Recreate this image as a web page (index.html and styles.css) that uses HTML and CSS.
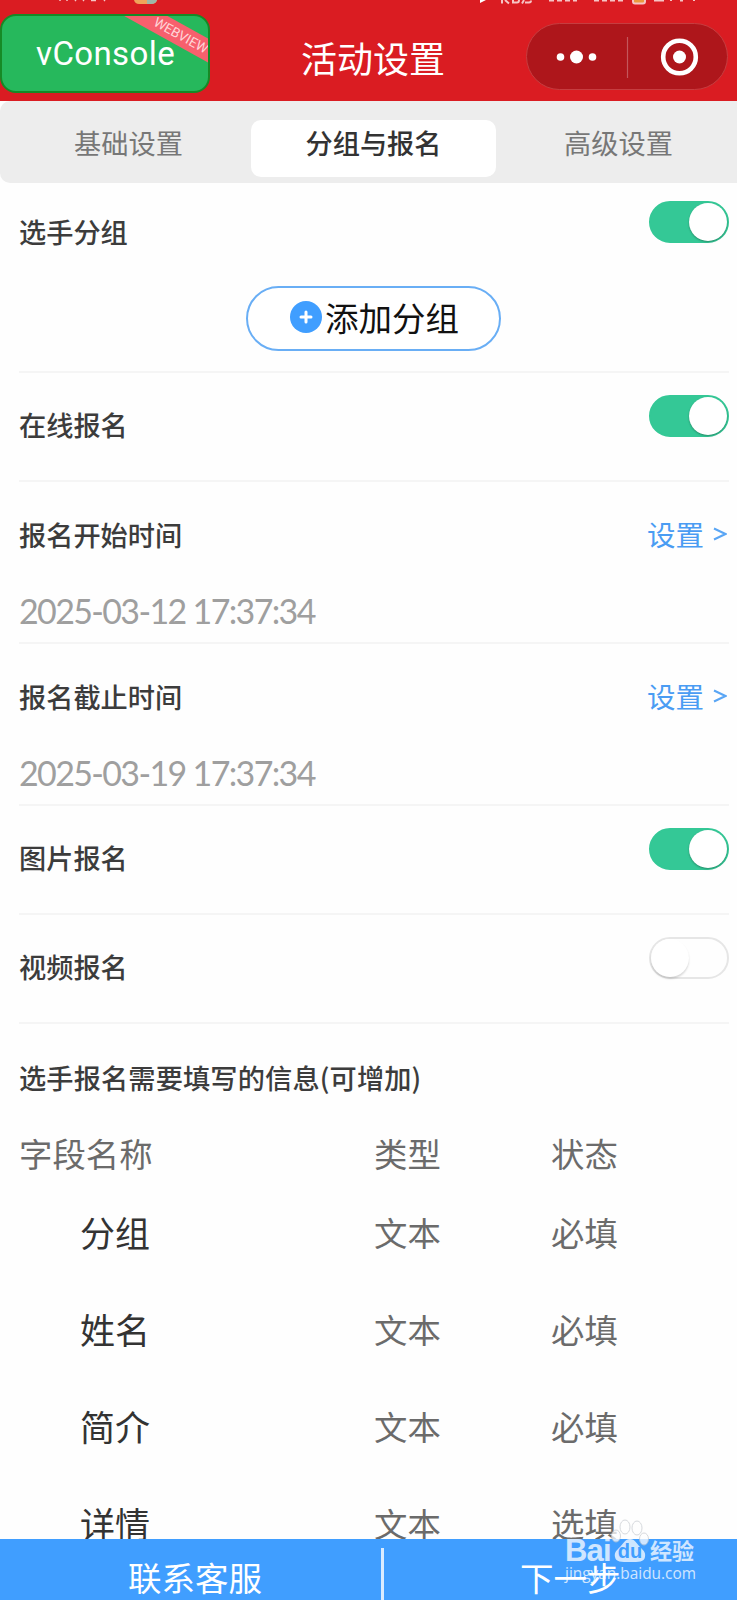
FILE: index.html
```html
<!DOCTYPE html>
<html lang="zh-CN">
<head>
<meta charset="utf-8">
<title>活动设置</title>
<link rel="stylesheet" href="styles.css">
</head>
<body>
<div class="screen">
  <header class="header">
    <svg class="status" width="737" height="5" viewBox="0 0 737 5">
      <g fill="none" stroke="#f6c4c4" stroke-width="1.500">
        <path d="M60 0v1M67 0v1M76 0l-1 1M83 0l1 1M91 .5h5M105 0l-1 1"/>
      </g>
      <path d="M134 0h23q-1 4-6 4h-12q-4 0-5-4z" fill="#f0a35a"/>
      <path d="M147 0h10q-1 4-6 4h-4z" fill="#9db7a8"/>
      <path d="M480 0h6l-6 3z" fill="#fff"/>
      <g fill="none" stroke="#f6c4c4" stroke-width="2">
        <path d="M502 0v3.500M505 0l4 3.500M513 0v2.500h4q2 0 2-2.500M522 3.500l2-3.500M525 2.500h4q2 0 2-2"/>
        <path d="M549 .5h28M594 .5h30" stroke-dasharray="5 3"/>
        <path d="M654 .5h10M671 0v1M680 .5h3M694 0v1"/>
      </g>
      <path d="M633 0v1.500q0 2 2 2h8q2 0 2-2V0" fill="#eb9a3e" stroke="#f6c4c4" stroke-width="2"/>
    </svg>
    <div class="vconsole"><span class="vconsole-text">vConsole</span><span class="ribbon">WEBVIEW</span></div>
    <h1 class="title">活动设置</h1>
    <div class="capsule">
      <svg width="202" height="66" viewBox="0 0 202 66">
        <g fill="#fff"><circle cx="34.500" cy="33" r="3.800"/><circle cx="50.500" cy="33" r="6.500"/><circle cx="66.500" cy="33" r="3.800"/><circle cx="153.500" cy="33" r="6.500"/></g>
        <path d="M101.500 13v41" stroke="#c3575b" stroke-width="1.200"/>
        <circle cx="153.500" cy="33" r="16.300" fill="none" stroke="#fff" stroke-width="4.600"/>
      </svg>
    </div>
  </header>
  <nav class="tabs">
    <span class="tab">基础设置</span>
    <span class="tab active">分组与报名</span>
    <span class="tab">高级设置</span>
  </nav>
  <main class="content">
    <section class="row group">
      <div class="line"><span class="label">选手分组</span><span class="switch on"></span></div>
      <button class="add"><svg width="32" height="32" viewBox="0 0 32 32"><circle cx="16" cy="16" r="16" fill="#409eff"/><path d="M16 11v10M11 16h10" stroke="#fff" stroke-width="3" stroke-linecap="round"/></svg><span>添加分组</span></button>
    </section>
    <section class="row simple"><div class="line"><span class="label">在线报名</span><span class="switch on"></span></div></section>
    <section class="row time"><div class="line"><span class="label">报名开始时间</span><span class="set">设置<svg width="14" height="14" viewBox="0 0 14 14"><path d="M1 1.500l11.500 5.500L1 12.500" fill="none" stroke="#5aa6f5" stroke-width="2"/></svg></span></div><div class="date">2025-03-12 17:37:34</div></section>
    <section class="row time"><div class="line"><span class="label">报名截止时间</span><span class="set">设置<svg width="14" height="14" viewBox="0 0 14 14"><path d="M1 1.500l11.500 5.500L1 12.500" fill="none" stroke="#5aa6f5" stroke-width="2"/></svg></span></div><div class="date">2025-03-19 17:37:34</div></section>
    <section class="row simple"><div class="line"><span class="label">图片报名</span><span class="switch on"></span></div></section>
    <section class="row simple"><div class="line"><span class="label">视频报名</span><span class="switch"></span></div></section>
    <section class="fields">
      <div class="label caption">选手报名需要填写的信息(可增加)</div>
      <div class="cells head"><span>字段名称</span><span>类型</span><span>状态</span></div>
      <div class="cells"><span class="name">分组</span><span>文本</span><span>必填</span></div>
      <div class="cells"><span class="name">姓名</span><span>文本</span><span>必填</span></div>
      <div class="cells"><span class="name">简介</span><span>文本</span><span>必填</span></div>
      <div class="cells"><span class="name">详情</span><span>文本</span><span>选填</span></div>
    </section>
  </main>
  <footer class="footer"><span class="contact">联系客服</span><span class="next">下一步</span></footer>
  <div class="watermark">
    <div class="brand"><span class="bai">Bai</span>
      <svg class="paw" width="38" height="44" viewBox="0 0 38 44">
        <g fill="#fff" stroke="#c9cdd2" stroke-width="1"><ellipse cx="5" cy="17" rx="4.500" ry="6"/><ellipse cx="14" cy="8" rx="5" ry="7"/><ellipse cx="26" cy="9" rx="5" ry="7"/><ellipse cx="33" cy="20" rx="4.500" ry="6"/></g>
        <path d="M19 20c5 0 7 5 10 8s6 5 5 10-6 5-15 5-14 0-15-5 2-7 5-10 5-8 10-8z" fill="#fff"/>
        <text x="19" y="39" text-anchor="middle" class="du">du</text>
      </svg>
      <span class="jy">经验</span></div>
    <div class="url">jingyan.baidu.com</div>
  </div>
</div>
</body>
</html>
```
FILE: styles.css
```css
* { box-sizing: border-box; }
body { margin: 0; background: #fdfdfd; font-family: "Noto Sans CJK SC", sans-serif; }
.screen { position: relative; width: 737px; height: 1600px; overflow: hidden; display: flex; flex-direction: column; background: #fefefe; }
.header { position: relative; flex: none; height: 101px; background: #da1c22; display: grid; grid-template-columns: 210px 1fr 202px; padding: 14px 9px 0 0; }
.status { position: absolute; left: 0; top: 0; }
.vconsole { position: relative; height: 79px; border: 2px solid #168a26; border-radius: 16px; background: #26b85c; overflow: hidden; color: #fff; font: 33px/75px Roboto, sans-serif; padding-left: 34px; }
.vconsole-text { letter-spacing: 0.4px; }
.ribbon { position: absolute; left: 114px; top: 9px; width: 130px; height: 21px; transform: rotate(29deg); background: #f7606d; color: #ffd5d8; font: 13.500px/21px Roboto, sans-serif; text-align: center; }
.title { margin: 0; padding-left: 91px; font-size: 36px; font-weight: 400; line-height: 86px; color: #fff; white-space: nowrap; }
.capsule { width: 202px; height: 67px; margin-top: 9px; border: 1px solid #c63d40; border-radius: 34px; background: #ae161b; }
.capsule svg { display: block; margin-left: -1px; }
.tabs { flex: none; height: 82px; background: #ededed; border-radius: 10px 0 0 10px; display: grid; grid-template-columns: repeat(3, 245px); padding-left: 6px; align-items: start; }
.tab { height: 57px; margin-top: 19px; text-align: center; font-size: 27.200px; line-height: 45px; color: #777; }
.tab.active { background: #fff; border-radius: 10px; color: #333; font-weight: 500; }
.content { flex: 1; min-height: 0; overflow: hidden; padding: 0 8px 0 19px; }
.row { border-bottom: 2px solid #f5f5f5; }
.line { display: flex; justify-content: space-between; align-items: flex-start; }
.label { font-size: 27.200px; font-weight: 500; line-height: 40px; color: #3c3c3c; }
.switch { flex: none; width: 80px; height: 42px; border-radius: 21px; border: 2px solid #e6e6e6; background: #fefefe; }
.switch::before { content: ""; display: block; width: 38px; height: 38px; border-radius: 50%; background: #fff; box-shadow: 0 2px 2px rgba(0,0,0,.15); }
.switch.on { background: #34c896; border-color: #34c896; }
.switch.on::before { margin-left: 38px; box-shadow: 0 1px 2px rgba(0,0,0,.3); }
.group { height: 190px; padding-top: 18px; }
.group .label { margin-top: 10px; }
.add { display: flex; align-items: center; justify-content: center; width: 255px; height: 65px; margin: 35px 0 0 227px; padding: 0; border: 2px solid #69aef5; border-radius: 33px; background: #fff; color: #111; font: 33.500px/60px "Noto Sans CJK SC", sans-serif; }
.add svg { margin: -3px 3px 0 2px; }
.add span { margin-top: -3px; }
.simple { height: 109px; padding-top: 22px; }
.simple .label { margin-top: 9px; }
.time { height: 162px; padding-top: 32px; }
.set { display: flex; align-items: center; gap: 9px; font-size: 28.500px; line-height: 40px; color: #4a9cf3; margin-right: 2px; }
.date { margin-top: 34px; font: 34px/46px Lato, sans-serif; letter-spacing: -1.650px; color: #9f9f9f; white-space: nowrap; }
.fields { padding-top: 33px; }
.caption { letter-spacing: .15px; }
.cells { display: grid; grid-template-columns: 355px 177px 1fr; align-items: center; height: 97px; font-size: 33.400px; line-height: 48px; color: #6b6b6b; }
.head { height: 81px; margin-top: 15px; margin-bottom: -10px; }
.name { padding-left: 61px; font-size: 35px; color: #333; }
.footer { flex: none; height: 61px; background: #409eff; color: #fff; font-size: 33.500px; line-height: 75px; display: grid; grid-template-columns: 383px 1fr; overflow: hidden; position: relative; }
.contact { padding-left: 128px; }
.next { padding-left: 137px; }
.footer::after { content: ""; position: absolute; left: 381px; top: 9px; width: 3px; height: 52px; background: #d9ebff; }
.watermark { position: absolute; left: 565px; top: 1519px; width: 140px; color: #fff; opacity: .75; }
.brand { display: flex; height: 44px; align-items: flex-end; }
.bai { width: 46px; font: bold 31px/25px "Liberation Sans", sans-serif; letter-spacing: -.8px; }
.paw { flex: none; }
.du { font: bold 20px "Liberation Sans", sans-serif; fill: #409eff; }
.jy { margin-left: 1px; font-size: 22px; font-weight: 700; line-height: 27px; }
.url { margin-top: 1px; font: 15.400px/20px "Open Sans", sans-serif; white-space: nowrap; }
```
